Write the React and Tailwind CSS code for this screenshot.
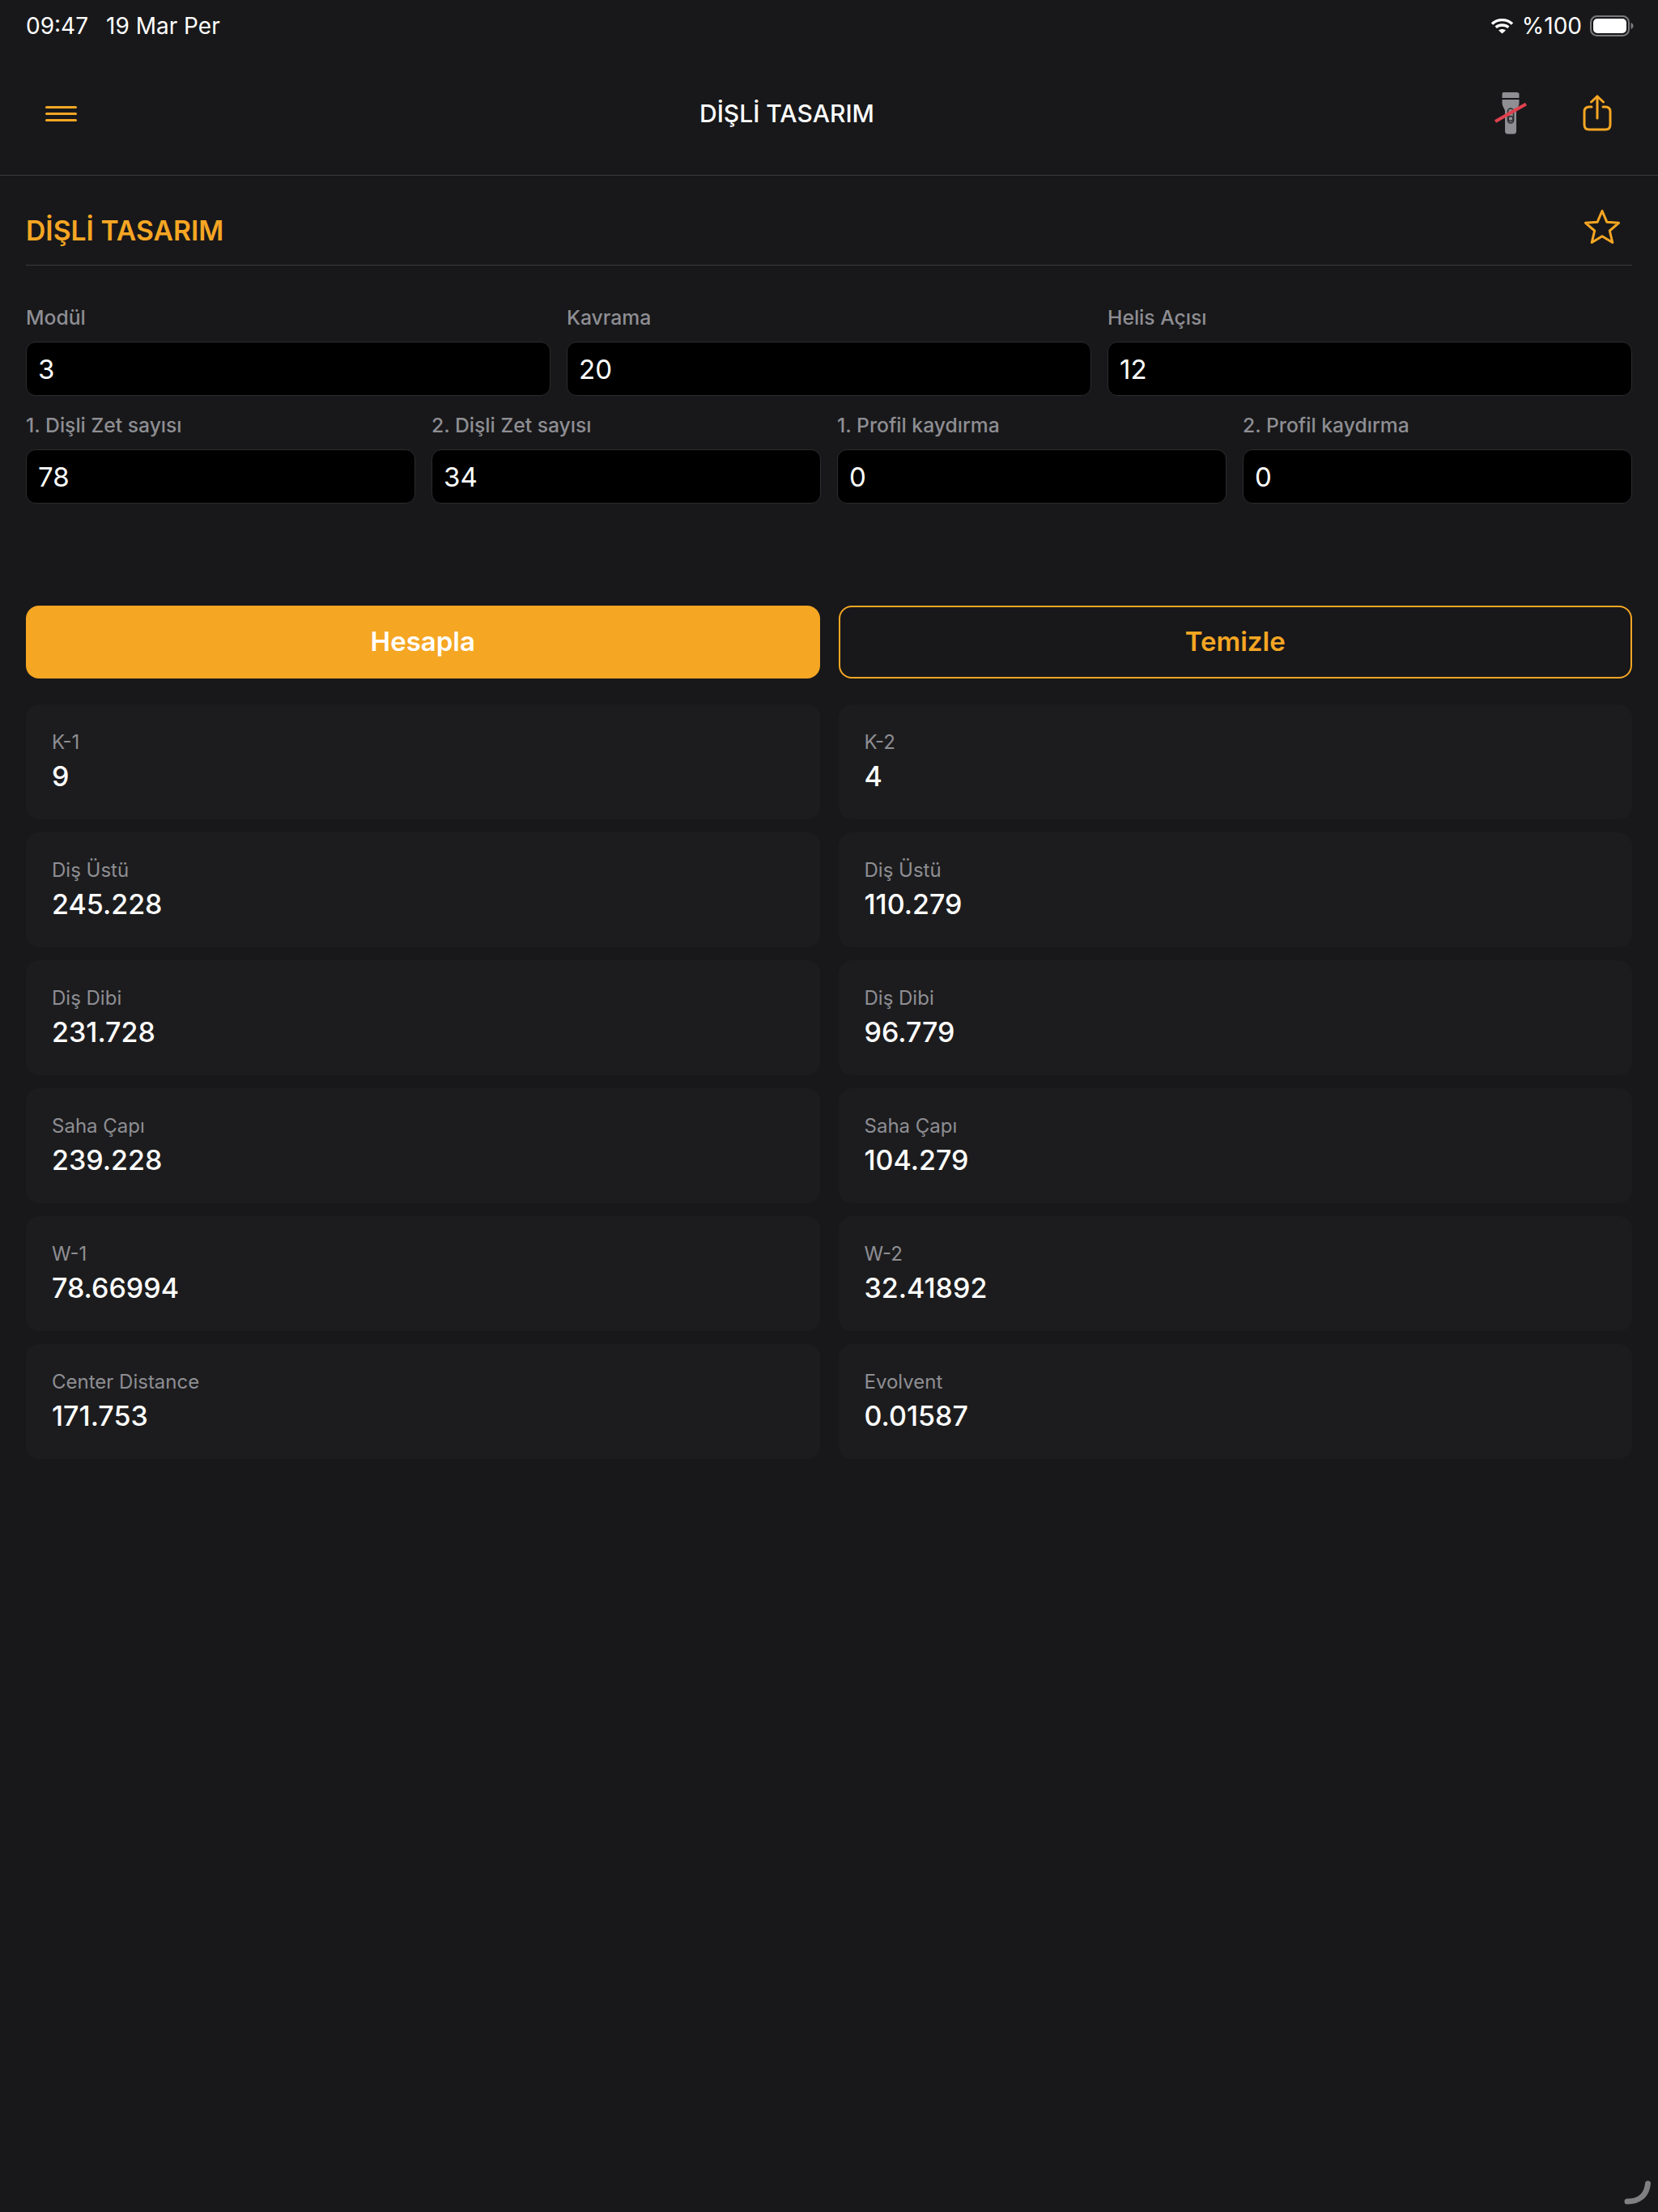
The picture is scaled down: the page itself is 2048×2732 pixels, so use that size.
const font = { fontFamily: 'Inter, "Noto Sans", sans-serif' };

const row1 = [['Modül', '3'], ['Kavrama', '20'], ['Helis Açısı', '12']];
const row2 = [['1. Dişli Zet sayısı', '78'], ['2. Dişli Zet sayısı', '34'], ['1. Profil kaydırma', '0'], ['2. Profil kaydırma', '0']];
const results = [
  ['K-1', '9'], ['K-2', '4'],
  ['Diş Üstü', '245.228'], ['Diş Üstü', '110.279'],
  ['Diş Dibi', '231.728'], ['Diş Dibi', '96.779'],
  ['Saha Çapı', '239.228'], ['Saha Çapı', '104.279'],
  ['W-1', '78.66994'], ['W-2', '32.41892'],
  ['Center Distance', '171.753'], ['Evolvent', '0.01587'],
];

function Field({ label, value }) {
  return (
    <div>
      <div className="h-8 mb-[14px] text-[24.7px] leading-8 font-medium text-[#8e8e93]">{label}</div>
      <div className="h-[67px] flex items-center px-[14px] pt-[2px] bg-black border border-[#2c2c2e] rounded-[12px] text-[33px] text-white">{value}</div>
    </div>
  );
}

function ResultCard({ label, value }) {
  return (
    <div className="h-[142px] px-8 pt-[31px] bg-[#1c1c1e] rounded-[16px]">
      <div className="h-8 text-[24px] leading-8 text-[#8e8e93]">{label}</div>
      <div className="h-[44px] mt-[4px] text-[34px] leading-[44px] font-medium text-white">{value}</div>
    </div>
  );
}

function Wifi() {
  return (
    <svg width="29" height="20" viewBox="0 0 28 20" fill="none" stroke="white" strokeWidth="3.4">
      <path d="M1.5 7.5C8.5 1 19.5 1 26.5 7.5" />
      <path d="M6.2 11.8C10.5 8 17.5 8 21.8 11.8" />
      <path d="M14 19.5L9.6 15.6C12 13.6 16 13.6 18.4 15.6Z" fill="white" stroke="none" />
    </svg>
  );
}

function Battery() {
  return (
    <svg width="55" height="26" viewBox="0 0 55 26">
      <rect x="1" y="1" width="47" height="24" rx="7.5" fill="none" stroke="#7a7a7c" strokeWidth="2" />
      <rect x="4" y="4" width="41" height="18" rx="5" fill="white" />
      <path d="M50.5 9C52.5 9.7 53.5 11 53.5 13C53.5 15 52.5 16.3 50.5 17Z" fill="#7a7a7c" />
    </svg>
  );
}

function Torch() {
  return (
    <svg width="42" height="54" viewBox="0 0 42 54">
      <path d="M10.5 3C10.5 1.5 11.5 1 13 1H27.5C29.5 1 31.5 1.5 31.5 3V8H10.5Z" fill="#8e8e93" />
      <path d="M10.5 10H31.5V14C31.5 19 28 21 28 25V49C28 51.5 26.5 52.5 25 52.5H17C15.5 52.5 14 51.5 14 49V25C14 21 10.5 19 10.5 14Z" fill="#8e8e93" />
      <rect x="17.5" y="21" width="7" height="18" rx="3.5" fill="none" stroke="#2c2c2e" strokeWidth="1.6" />
      <circle cx="21" cy="33.5" r="3" fill="none" stroke="#2c2c2e" strokeWidth="1.4" />
      <path d="M2 37L40 15.5" stroke="#e0414f" strokeWidth="4" />
    </svg>
  );
}

function Share() {
  return (
    <svg width="36" height="46" viewBox="0 0 36 46" fill="none" stroke="#f5a623" strokeWidth="3" strokeLinecap="round" strokeLinejoin="round">
      <path d="M11 15H8C4 15 2 17 2 21V37C2 41 4 43 8 43H28C32 43 34 41 34 37V21C34 17 32 15 28 15H25" />
      <path d="M18 29V2" />
      <path d="M10.5 9L18 2L25.5 9" />
    </svg>
  );
}

function Star() {
  return (
    <svg width="46" height="44" viewBox="0 0 46 44" fill="none" stroke="#f5a623" strokeWidth="3" strokeLinejoin="round">
      <path d="M23 2.5L28.8 16.2L43.5 17.3L32.3 27L35.8 41.5L23 33.7L10.2 41.5L13.7 27L2.5 17.3L17.2 16.2Z" />
    </svg>
  );
}

export default function App() {
  return (
    <div className="relative w-[2048px] h-[2732px] overflow-hidden bg-[#18181a]" style={font}>
      <div className="h-16 px-8 flex items-center justify-between text-[28px] text-white">
        <div className="flex gap-[22px]">
          <span>09:47</span>
          <span>19 Mar Per</span>
        </div>
        <div className="flex items-center gap-[10px] -mr-[3px]">
          <Wifi />
          <span>%100</span>
          <Battery />
        </div>
      </div>

      <div className="h-[153px] relative flex items-center justify-between border-b border-[#3a3a3c] pl-[56px] pr-[57px]">
        <div className="flex flex-col gap-[5px] w-[39px]">
          <span className="h-[3px] bg-[#f5a623] rounded-full" />
          <span className="h-[3px] bg-[#f5a623] rounded-full" />
          <span className="h-[3px] bg-[#f5a623] rounded-full" />
        </div>
        <div className="absolute left-[864px] top-[58px] text-[30px] leading-9 font-medium text-white">DİŞLİ TASARIM</div>
        <div className="flex items-center gap-[68px]">
          <Torch />
          <Share />
        </div>
      </div>

      <div className="mx-8 h-[111px] pt-[26px] flex items-center justify-between border-b border-[#3a3a3c]">
        <div className="text-[33.7px] font-semibold text-[#f5a623]">DİŞLİ TASARIM</div>
        <div className="mr-[14px] mb-[10px]"><Star /></div>
      </div>

      <div className="px-8 pt-[48px]">
        <div className="grid grid-cols-3 gap-x-5">
          {row1.map(([label, value]) => <Field key={label} label={label} value={value} />)}
        </div>
        <div className="grid grid-cols-4 gap-x-5 mt-5">
          {row2.map(([label, value]) => <Field key={label} label={label} value={value} />)}
        </div>

        <div className="grid grid-cols-2 gap-x-[23px] mt-[126px]">
          <button className="h-[90px] rounded-[16px] bg-[#f5a623] text-[33px] font-semibold text-white">Hesapla</button>
          <button className="h-[90px] rounded-[16px] border-2 border-[#f5a623] text-[33px] font-semibold text-[#f5a623]">Temizle</button>
        </div>

        <div className="grid grid-cols-2 gap-x-[23px] gap-y-4 mt-8">
          {results.map(([label, value], i) => <ResultCard key={i} label={label} value={value} />)}
        </div>
      </div>

      <svg className="absolute right-[8px] bottom-[8px]" width="34" height="34" viewBox="0 0 34 34" fill="none">
        <path d="M4 29C18 29 28 22 29.5 7" stroke="#808082" strokeWidth="7" strokeLinecap="round" />
      </svg>
    </div>
  );
}
